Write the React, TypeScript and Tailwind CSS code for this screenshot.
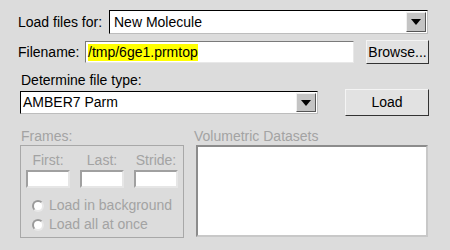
import React from "react";

const Arrow: React.FC = () => (
  <div className="flex h-full w-[20px] items-center justify-center border border-t-[#f0f0f0] border-l-[#f0f0f0] border-b-[#555] border-r-[#555] bg-[#c4c4c4]">
    <svg width="10" height="6" viewBox="0 0 10 6">
      <polygon points="0,0 10,0 5,6" fill="#000" />
    </svg>
  </div>
);

const SmallEntry: React.FC = () => (
  <div className="h-[18px] w-[44px] border-2 border-t-[#a0a0a0] border-l-[#a0a0a0] border-b-[#e6e6e6] border-r-[#e6e6e6] bg-white" />
);

const Radio: React.FC<{ label: string }> = ({ label }) => (
  <div className="flex h-[19px] items-center gap-[5px] whitespace-nowrap">
    <div className="h-[12px] w-[12px] shrink-0 rounded-full border-2 border-[#9a9a9a] border-b-[#e8e8e8] border-r-[#e8e8e8] bg-white" />
    <span>{label}</span>
  </div>
);

const App: React.FC = () => {
  return (
    <div
      className="h-[250px] w-[450px] bg-[#dcdcdc] text-[14px] leading-[17px] text-black"
      style={{ fontFamily: '"Liberation Sans", Arial, sans-serif' }}
    >
      <div className="flex items-center pl-[18px] pt-[10px]">
        <span className="w-[91px]">Load files for:</span>
        <div className="flex h-[24px] w-[319px] items-center border border-t-[#000] border-l-[#000] border-b-[#bdbdbd] border-r-[#bdbdbd] bg-white">
          <span className="flex-1 pl-[4px]">New Molecule</span>
          <div className="h-[22px] py-[1px] pr-[1px]">
            <Arrow />
          </div>
        </div>
      </div>

      <div className="mt-[6px] flex items-center pl-[18px]">
        <span className="w-[67px]">Filename:</span>
        <div className="flex h-[22px] w-[269px] items-center border border-t-[#7a7a7a] border-l-[#7a7a7a] border-b-[#e8e8e8] border-r-[#e8e8e8] bg-white pl-[2px]">
          <span className="bg-[#ffff00]">/tmp/6ge1.prmtop</span>
        </div>
        <button className="ml-[12px] h-[24px] w-[63px] border border-t-[#f4f4f4] border-l-[#f4f4f4] border-b-[#333] border-r-[#333] bg-[#e2e2e2]">
          Browse...
        </button>
      </div>

      <div className="mt-[8px] pl-[21px]">Determine file type:</div>
      <div className="flex items-center pl-[20px]">
        <div className="flex h-[23px] w-[298px] items-center border border-t-[#000] border-l-[#000] border-b-[#bdbdbd] border-r-[#bdbdbd] bg-white">
          <span className="flex-1 pl-[2px]">AMBER7 Parm</span>
          <div className="h-[21px] py-[1px] pr-[1px]">
            <Arrow />
          </div>
        </div>
        <button className="ml-[27px] h-[27px] w-[84px] border border-t-[#f4f4f4] border-l-[#f4f4f4] border-b-[#333] border-r-[#333] bg-[#e2e2e2]">
          Load
        </button>
      </div>

      <div className="mt-[12px] flex pl-[20px] text-[#a3a3a3]">
        <div className="w-[164px]">
          <div className="pl-[1px]">Frames:</div>
          <div className="h-[93px] border border-[#a8a8a8] px-[5px] pt-[6px]">
            <div className="flex justify-between">
              <div className="flex flex-col items-center">
                <span>First:</span>
                <div className="mt-[1px]"><SmallEntry /></div>
              </div>
              <div className="flex flex-col items-center">
                <span>Last:</span>
                <div className="mt-[1px]"><SmallEntry /></div>
              </div>
              <div className="flex flex-col items-center">
                <span>Stride:</span>
                <div className="mt-[1px]"><SmallEntry /></div>
              </div>
            </div>
            <div className="mt-[8px] pl-[6px]">
              <Radio label="Load in background" />
              <Radio label="Load all at once" />
            </div>
          </div>
        </div>
        <div className="ml-[12px] w-[232px]">
          <div className="-ml-[2px]">Volumetric Datasets</div>
          <div className="h-[92px] border-2 border-t-[#8c8c8c] border-l-[#8c8c8c] border-b-[#c8c8c8] border-r-[#c8c8c8] bg-white" />
        </div>
      </div>
    </div>
  );
};

export default App;
